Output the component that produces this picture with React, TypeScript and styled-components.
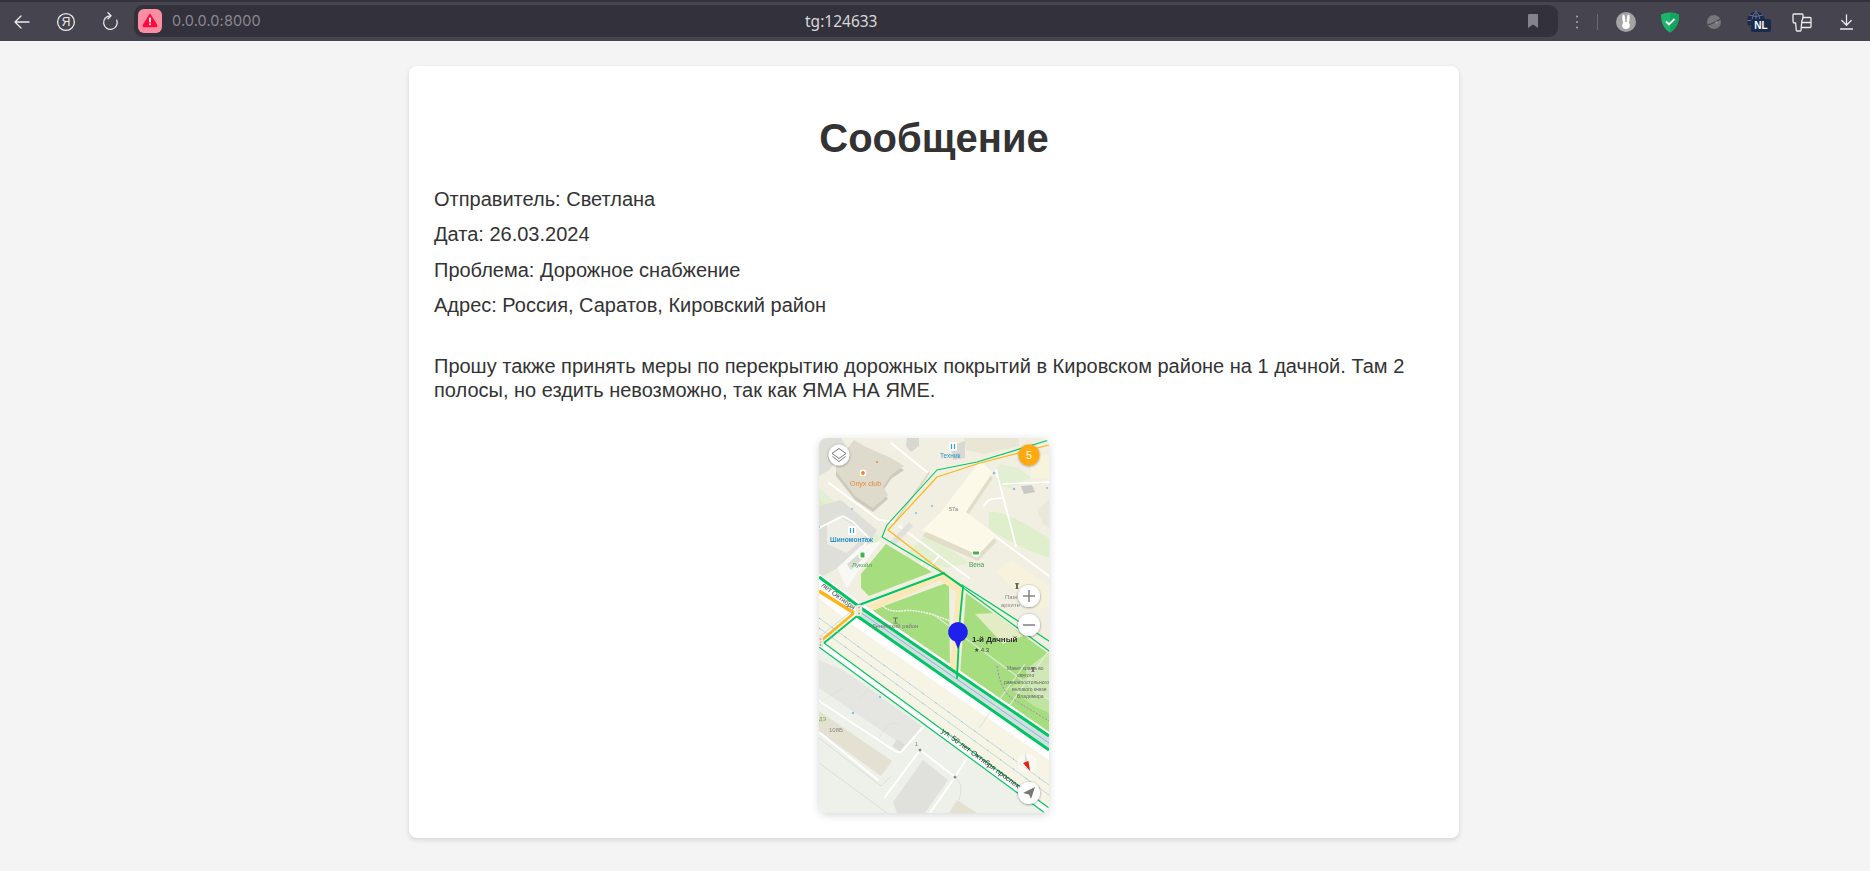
import React from "react";
import styled, { createGlobalStyle } from "styled-components";

const Global = createGlobalStyle`
  html, body { margin: 0; padding: 0; background: #f4f4f4; }
  body { font-family: "Liberation Sans", Arial, sans-serif; color: #333; overflow: hidden; }
`;

const Shell = styled.div`
  display: flex;
  flex-direction: column;
  height: 871px;
`;

const Toolbar = styled.header`
  display: flex;
  align-items: center;
  height: 41px;
  box-sizing: border-box;
  padding: 1px 2px 0 0;
  background: #46444e;
  border-top: 2px solid #34323c;
  flex: none;
`;

const IconSlot = styled.div<{ $w?: number }>`
  width: ${(p) => p.$w ?? 44}px;
  height: 32px;
  flex: none;
  display: flex;
  align-items: center;
  justify-content: center;
`;

const AddressBar = styled.div`
  flex: 1;
  margin-left: 2px;
  height: 32px;
  margin-top: -3px;
  position: relative;
  display: flex;
  align-items: center;
  background: #33313c;
  border-radius: 9px;
  padding-left: 4px;
`;

const SecurityBadge = styled.div`
  width: 24px;
  height: 24px;
  border-radius: 6px;
  background: #fc8ea3;
  display: flex;
  align-items: center;
  justify-content: center;
  flex: none;
`;

const Host = styled.span`
  font-family: Inter, "Noto Sans", sans-serif;
  font-size: 14.5px;
  color: #8a8890;
  margin-left: 10px;
  letter-spacing: 0.1px;
`;

const PageTitle = styled.span`
  position: absolute;
  left: 671px;
  top: 6px;
  font-family: "Noto Sans", sans-serif;
  font-size: 15.5px;
  line-height: 20px;
  color: #d8d7da;
`;

const BookmarkIcon = styled.div`
  position: absolute;
  right: 20px;
  top: 9px;
  display: flex;
`;

const Separator = styled.div`
  width: 1px;
  height: 16px;
  margin: 0 6px 0 1px;
  background: #6b6972;
  flex: none;
`;

const Page = styled.main`
  flex: 1;
  padding-right: 2px;
`;

const Card = styled.article`
  width: 1050px;
  box-sizing: border-box;
  margin: 25px auto 0;
  padding: 22px 25px 25px;
  background: #fff;
  border-radius: 8px;
  box-shadow: 0 2px 5px rgba(0, 0, 0, 0.13);
`;

const Heading = styled.h1`
  margin: 27px 0;
  text-align: center;
  font-size: 40px;
  line-height: 46px;
  font-weight: 700;
  color: #333;
`;

const Field = styled.p`
  margin: 12px 0;
  font-size: 20px;
  line-height: 23.33px;
  color: #333;
`;

const Message = styled.p`
  margin: 37px 0 36px;
  font-size: 20px;
  line-height: 24px;
  color: #333;
`;

const MapFrame = styled.figure`
  margin: 0 auto;
  width: 230px;
  height: 375px;
  border-radius: 8px;
  overflow: hidden;
  box-shadow: 0 2px 8px rgba(0, 0, 0, 0.16);
`;

const MapSvg = styled.svg`
  display: block;
  width: 230px;
  height: 375px;
`;

const MapLabel = styled.text<{ $size?: number; $fill?: string; $bold?: boolean }>`
  font-family: "Liberation Sans", Arial, sans-serif;
  font-size: ${(p) => p.$size ?? 6}px;
  fill: ${(p) => p.$fill ?? "#777"};
  font-weight: ${(p) => (p.$bold ? 700 : 400)};
`;

const G = "#04c562";
const O = "#fdb515";

function MapPicture() {
  return (
    <MapSvg viewBox="0 0 230 375">
      <defs>
        <filter id="soft" x="-5%" y="-5%" width="110%" height="110%">
          <feGaussianBlur stdDeviation="0.35" />
        </filter>
        <filter id="halo" x="-30%" y="-30%" width="160%" height="160%">
          <feDropShadow dx="0" dy="0.5" stdDeviation="1.1" floodColor="#000" floodOpacity="0.5" />
        </filter>
      </defs>
      <g filter="url(#soft)">
        <rect width="230" height="375" fill="#f1efe2" />
        {/* pale green bands, top area */}
        <polygon points="0,50 40,85 62,100 52,112 0,72" fill="#e3efd2" />
        <polygon points="0,60 10,72 8,78 0,70" fill="#dcecc8" />
        <polygon points="60,0 80,0 66,6" fill="#dcecc8" />
        <path d="M170,75 C180,70 205,85 230,100 L230,120 C205,112 185,100 170,92 Z" fill="#dfeecb" />
        <path d="M180,26 L200,30 L212,40 L190,50 L178,46 Z" fill="#e3efd2" />
        <path d="M82,120 L110,95 L150,125 L128,130 Z" fill="#e4efd2" />

        {/* grey blocks, top-left */}
        <polygon points="0,0 22,0 28,10 10,32 0,38" fill="#dfdfda" />
        <polygon points="0,68 22,62 58,92 50,105 28,125 0,140" fill="#dfdfda" />
        <polygon points="8,86 20,78 48,96 28,115 8,106" fill="#efeee6" />

        {/* Onyx club */}
        <polygon points="17,30 35,5 45,11 72,24 85,32 72,41 64,53 69,61 54,74 36,62 17,38" fill="#cfcbbc" />
        <polygon points="17,25 35,2 45,8 72,20 85,28 72,37 64,49 69,57 54,70 36,58 17,33" fill="#dedbcc" />

        {/* top buildings */}
        <polygon points="30,0 96,0 92,4 72,16 64,8 50,0" fill="#f2f0e4" />
        <polygon points="88,0 100,0 100,8 92,14 87,8" fill="#d9d8d0" />
        <polygon points="145,0 200,0 200,8 165,16 147,12" fill="#e9e6d6" />
        <polygon points="212,20 230,16 230,40 212,40" fill="#f7f3dd" />
        <polygon points="202,48 213,47 216,54 205,56" fill="#c9c9c4" />
        <polygon points="132,8 146,3 146,20 134,22" fill="#dad9d1" />

        {/* white lanes, top */}
        <g fill="none" stroke="#fff" strokeLinecap="round">
          <path d="M72,5 L108,34" strokeWidth="2" />
          <path d="M10,45 L60,82 L76,84" strokeWidth="2" />
          <path d="M76,84 L110,35" strokeWidth="1.6" stroke="#d9d7c8" />
          <path d="M177,32 L197,108" strokeWidth="1.8" />
          <path d="M184,46 L230,44" strokeWidth="1.6" />
          <path d="M184,60 C172,60 168,62 165,68" strokeWidth="1.6" />
          <path d="M176,98 L230,138" strokeWidth="1.8" />
          <path d="M80,88 L150,140" strokeWidth="1.6" />
          <path d="M92,86 L73,106" strokeWidth="6" stroke="#e1e1db" strokeLinecap="butt" />
          <path d="M0,90 L24,78 L34,84 L50,100 L30,130" strokeWidth="1.8" />
          <path d="M110,130 L120,118" strokeWidth="1.8" />
          <path d="M96,134 L104,124" strokeWidth="1.8" />
        </g>

        {/* Building 57a */}
        <polygon points="161,29 174,40 147,80 178,103 159,123 103,98 121,81" fill="#e2ddc8" />
        <polygon points="161,23 174,34 147,74 178,97 159,117 103,92 121,75" fill="#fdf9e8" />

        {/* pale building on right */}
        <polygon points="177,133 192,122 230,148 230,168 215,172" fill="#f7f2dc" />
        <polygon points="218,72 230,62 230,90 224,86" fill="#e9e8dc" />

        {/* white pad beside petrol station */}
        <polygon points="63,103 40,132 28,150 18,130 42,108" fill="#f8f8f5" />
        <polygon points="28,126 42,114 46,118 32,132" fill="#dcdcd6" />

        {/* parks */}
        <polygon points="67,106 113,134 50,158 42,150 42,136" fill="#a6de7f" />
        <polygon points="54,172 130,144 131,232 68,186" fill="#a6de7f" />
        <polygon points="147,155 230,216 230,298 141,237" fill="#a6de7f" />
        <polygon points="156,176 176,175 204,198 184,206" fill="#e3ecc5" />
        <polygon points="190,250 230,225 230,275 215,268" fill="#bfe5a0" />
        <polygon points="206,232 230,214 230,262 216,258" fill="#d4e9bb" opacity="0.8" />

        {/* main road bands */}
        <polygon points="0,136 42,165 230,294 230,375 0,209" fill="#f6f4e5" />
        <polygon points="0,136 42,165 230,294 230,322 38,190 0,160" fill="#ffffff" />
        <polygon points="42,170 230,298 230,312 38,178" fill="#cfe0e0" />
        <polygon points="0,209 230,378 0,378" fill="#eef0ea" />
        <polygon points="5,205 230,370 230,378 0,209" fill="#ffffff" />

        {/* lower buildings and lots */}
        <polygon points="24,232 104,289 88,310 0,250 0,222" fill="#e5e6e1" />
        <polygon points="0,273 73,323 62,338 0,293" fill="#e4e1d2" />
        <polygon points="104,322 129,342 106,375 78,375 74,364" fill="#e0e1dc" />
        <polygon points="138,362 158,375 130,375" fill="#e4e1d2" />
        <polygon points="78,302 85,307 81,313 74,308" fill="#dddeda" stroke="#c8c9c4" strokeWidth="0.4" />
        <g fill="none" stroke="#fff" strokeWidth="2" strokeLinecap="round">
          <path d="M-9,257 L76,313 Q81,316 84,312 L104,289" />
          <path d="M1,295 L59,342" />
          <path d="M66,359 L101,312 L136,339 L111,375" />
          <path d="M148,320 L136,339" />
        </g>
        <g fill="none" stroke="#d4d5d0" strokeWidth="0.7">
          <path d="M0,300 L62,348 L72,338" />
          <path d="M0,325 L68,375" />
          <path d="M136,339 C143,345 143,352 140,362" />
          <path d="M0,265 L24,250 M40,262 L52,248 M60,300 L66,290 C70,284 76,284 80,287 M40,230 L104,280" strokeDasharray="1.4 1.2" />
        </g>
        <circle cx="101" cy="312" r="1.5" fill="#8c8a86" />
        <circle cx="136" cy="339" r="1.5" fill="#8c8a86" />

        {/* park paths */}
        <g fill="none" stroke="#e8eee2" strokeWidth="1.2">
          <path d="M64,168 Q70,174 82,173 Q96,171 115,177 L134,184" strokeDasharray="2 0.8" stroke="#f1f4ef" strokeWidth="1.5" />
          <path d="M115,177 L230,262" stroke="#dfe8d5" />
          <path d="M206,226 L160,290" stroke="#dfe8d5" />
          <path d="M228,215 L190,268" stroke="#e8eee2" />
        </g>
        <path d="M178,228 C180,240 182,250 192,260 L230,283" fill="none" stroke="#a675d6" strokeWidth="0.9" strokeDasharray="2 1.6" />

        {/* side roads */}
        <polygon points="122,135 128,139 56,172 48,168" fill="#fbe8b7" />
        <polygon points="124,136 143,150 140,156 118,140" fill="#fbe8b7" />
        <polygon points="137,152 144,153 139,236 131,232" fill="#fbe8b7" />

        {/* route lines, thin */}
        <g fill="none" strokeLinejoin="round" strokeLinecap="round">
          <path d="M230,7 L161,25 L118,39 L69,92 L121,132 L144,149" stroke={O} strokeWidth="1.2" />
          <path d="M230,2 L158,24 L118,32 L68,87 L63,99 L124,135" stroke={G} strokeWidth="1.1" />
          <path d="M124,135 L230,213" stroke={G} strokeWidth="1.2" />
          <path d="M143,147 L230,203" stroke={G} strokeWidth="1.2" />
          <path d="M124,135 L143,148" stroke={G} strokeWidth="1.6" />
          <path d="M144,149 L141,180 L138,240" stroke={G} strokeWidth="1.8" />
          <path d="M125,135 L40,167" stroke={G} strokeWidth="2" />
        </g>

        {/* main road lines */}
        <g fill="none" strokeLinecap="butt">
          <path d="M0,153 L35,175" stroke={O} strokeWidth="3.4" />
          <path d="M35,175 L3,202" stroke={O} strokeWidth="2.6" />
          <path d="M0,139 L42,170 L230,298" stroke={G} strokeWidth="3" />
          <path d="M38,178 L230,312" stroke={G} strokeWidth="3" />
          <path d="M38,178 L5,205" stroke={G} strokeWidth="1.8" />
          <path d="M0,199 L33,173" stroke="#cfe0e0" strokeWidth="1" />
          <path d="M41,174 L230,305" stroke="#8fb6c8" strokeWidth="1" />
          <path d="M5,205 L230,370" stroke={G} strokeWidth="1.2" />
          <path d="M0,209 L230,378" stroke={G} strokeWidth="1.2" />
          <path d="M0,180 L230,347" stroke="#8cc0e3" strokeWidth="0.5" />
          <path d="M0,190 L230,357" stroke="#8cc0e3" strokeWidth="0.5" />
          <path d="M0,180 L230,347" stroke="#6fb0e0" strokeWidth="1" strokeDasharray="1 15" />
          <path d="M0,190 L230,357" stroke="#6fb0e0" strokeWidth="1" strokeDasharray="1 15" />
        </g>

        {/* traffic lights */}
        <rect x="37" y="167" width="6" height="11" rx="1.5" fill="#efefe8" stroke="#c8c8c0" strokeWidth="0.5" />
        <circle cx="40" cy="169.5" r="1" fill="#f2998c" />
        <circle cx="40" cy="172.5" r="1" fill="#f4cd5a" />
        <circle cx="40" cy="175.5" r="1" fill="#6dcc83" />
        <rect x="-1" y="198" width="5" height="11" rx="1.5" fill="#efefe8" stroke="#c8c8c0" strokeWidth="0.5" />
        <circle cx="1.5" cy="201" r="1" fill="#f2998c" />
        <circle cx="1.5" cy="204" r="1" fill="#f4cd5a" />
        <circle cx="1.5" cy="207" r="1" fill="#6dcc83" />

        {/* POI icons */}
        <circle cx="44" cy="35" r="3.4" fill="#fff" />
        <circle cx="44" cy="35" r="1.9" fill="#f5802b" />
        <circle cx="58" cy="24" r="1" fill="#f5802b" />
        <rect x="130" y="4" width="8" height="9" rx="1.5" fill="#fff" />
        <path d="M132.5,6 v5 M135.5,6 v5" stroke="#2f9fd8" strokeWidth="1.2" />
        <rect x="29" y="88" width="8" height="9" rx="1.5" fill="#fff" />
        <path d="M31.5,90 v5 M34.5,90 v5" stroke="#2f9fd8" strokeWidth="1.2" />
        <circle cx="43.5" cy="117" r="4" fill="#fff" />
        <rect x="41.5" y="114.5" width="4" height="5" rx="0.8" fill="#3cb54a" />
        <circle cx="157" cy="115" r="4" fill="#fff" />
        <path d="M154,113.5 h6 v3 h-6 z" fill="#3cb54a" />
        <path d="M74,180 h5 M76.5,180 v4 M74.5,185 h4" stroke="#666" strokeWidth="0.9" />
        <path d="M196,145 h4 l-1,2 v3 l1,1 h-4 l1,-1 v-3 z" fill="#666" />
        <path d="M212,229 h4 l-1,2 v2 l1,1 h-4 l1,-1 v-2 z" fill="#777" />
        <g fill="#7ec0ea">
          <circle cx="113" cy="68" r="1" />
          <circle cx="175" cy="35" r="1.2" />
          <circle cx="195" cy="51" r="1.2" />
          <circle cx="228" cy="50" r="1" />
          <circle cx="97" cy="75" r="1" />
          <circle cx="33" cy="71" r="0.9" />
          <circle cx="61" cy="259" r="1.2" />
          <circle cx="34" cy="275" r="1.2" />
          <circle cx="132" cy="298" r="1.2" />
          <circle cx="0" cy="89" r="1" />
        </g>

        {/* labels */}
        <MapLabel x="31" y="48" $size={7} $fill="#e28a3a">Onyx club</MapLabel>
        <MapLabel x="121" y="20" $size={6.5} $fill="#2a92c8">Техник</MapLabel>
        <MapLabel x="11" y="104" $size={6.6} $fill="#2a92c8" $bold>Шиномонтаж</MapLabel>
        <MapLabel x="33" y="129" $size={6} $fill="#3f9f4a">Лукойл</MapLabel>
        <MapLabel x="150" y="129" $size={6.5} $fill="#3f9f4a">Вена</MapLabel>
        <MapLabel x="130" y="73" $size={5.5} $fill="#777">57а</MapLabel>
        <MapLabel x="186" y="161" $size={6} $fill="#888">Пам</MapLabel>
        <MapLabel x="182" y="169" $size={6} $fill="#888">архите</MapLabel>
        <MapLabel x="53" y="190" $size={5.8} $fill="#777">Ленинский район</MapLabel>
        <MapLabel x="10" y="294" $size={6} $fill="#8a8a80">108Б</MapLabel>
        <MapLabel x="0" y="283" $size={5} $fill="#72b84a">ДЭ</MapLabel>
        <MapLabel x="96" y="308" $size={5} $fill="#777">1</MapLabel>
        <MapLabel x="153" y="204" $size={8} $fill="#2c2c2c" $bold>1-й Дачный</MapLabel>
        <MapLabel x="155" y="214" $size={6} $fill="#444">★ 4.3</MapLabel>
        <MapLabel x="188" y="232" $size={5} $fill="#666">Макет храма во</MapLabel>
        <MapLabel x="198" y="239" $size={5} $fill="#666">святого</MapLabel>
        <MapLabel x="185" y="246" $size={5} $fill="#666">равноапостольного</MapLabel>
        <MapLabel x="193" y="253" $size={5} $fill="#666">великого князя</MapLabel>
        <MapLabel x="198" y="260" $size={5} $fill="#666">Владимира</MapLabel>
        <MapLabel transform="translate(2 148) rotate(37)" $size={7} $fill="#3a3a3a">лет Октября</MapLabel>
        <MapLabel transform="translate(122 294) rotate(36.5)" $size={7.5} $fill="#2d2d2d">ул. 50 лет Октября проспект</MapLabel>
      </g>

      {/* pin */}
      <path d="M139,184 a10,10 0 0 1 3,19.5 L139,211 L136,203.5 A10,10 0 0 1 139,184 Z" fill="#2020ee" />

      {/* map controls */}
      <g filter="url(#halo)">
        <circle cx="20" cy="17" r="10.5" fill="#fff" />
        <circle cx="210" cy="17" r="10.5" fill="#ffa90a" />
        <circle cx="210" cy="158" r="11" fill="#fff" />
        <circle cx="210" cy="187" r="11" fill="#fff" />
        <circle cx="210" cy="355" r="11" fill="#fff" />
      </g>
      <path d="M20,10.5 L27,15.5 L20,20.5 L13,15.5 Z M13.5,18.5 L20,23.5 L26.5,18.5" fill="none" stroke="#555" strokeWidth="0.8" strokeLinejoin="round" />
      <MapLabel x="210" y="21" textAnchor="middle" $size={11} $fill="#fff">5</MapLabel>
      <path d="M204,158 h12 M210,152 v12" stroke="#888" strokeWidth="1.6" />
      <path d="M204,187 h12" stroke="#888" strokeWidth="1.6" />
      <path d="M216,349 L212,361 L210,356.5 L204,355 Z" fill="#777" />
      <circle cx="208" cy="325" r="10" fill="#fff" opacity="0.45" />
      <path d="M206,314 L206,326 L209,326 Z" fill="#d9d9d9" />
      <path d="M211,333 L204,325 L209.5,323 Z" fill="#f0180c" />
    </MapSvg>
  );
}

const Stroke = { fill: "none", stroke: "#ebebed", strokeWidth: 1.3, strokeLinecap: "round", strokeLinejoin: "round" } as const;

const IconLetter = styled.text`
  font-family: "Liberation Sans", Arial, sans-serif;
  font-size: 12px;
  fill: #ebebed;
`;

const TagLetter = styled.text`
  font-family: "Liberation Sans", Arial, sans-serif;
  font-size: 10px;
  font-weight: 700;
  fill: #fff;
`;

export default function App() {
  return (
    <Shell>
      <Global />
      <Toolbar>
        <IconSlot>
          <svg width="16" height="14" viewBox="0 0 16 14" {...Stroke}>
            <path d="M15,7 H1 M7,1 L1,7 L7,13" />
          </svg>
        </IconSlot>
        <IconSlot>
          <svg width="20" height="20" viewBox="0 0 20 20">
            <circle cx="10" cy="10" r="8.4" {...Stroke} />
            <IconLetter x="10" y="14.2" textAnchor="middle">Я</IconLetter>
          </svg>
        </IconSlot>
        <IconSlot>
          <svg width="18" height="20" viewBox="0 0 18 20" {...Stroke}>
            <path d="M9.5,3.8 A6.8,6.8 0 1 0 15.8,8.2" />
            <path d="M7,0.8 L10,3.8 L7,6.8" />
          </svg>
        </IconSlot>
        <AddressBar>
          <SecurityBadge>
            <svg width="16" height="15" viewBox="0 0 16 15">
              <path d="M8,1.4 L14.6,12.2 Q15,13.6 13.6,13.6 H2.4 Q1,13.6 1.4,12.2 Z" fill="#ff0a3c" stroke="#ff0a3c" strokeWidth="1.4" strokeLinejoin="round" />
              <rect x="7.1" y="4.6" width="1.8" height="4.8" rx="0.6" fill="#fff" />
              <circle cx="8" cy="11.3" r="1.05" fill="#fff" />
            </svg>
          </SecurityBadge>
          <Host>0.0.0.0:8000</Host>
          <PageTitle>tg:124633</PageTitle>
          <BookmarkIcon>
            <svg width="10" height="14" viewBox="0 0 10 14">
              <path d="M0,1 Q0,0 1,0 H9 Q10,0 10,1 V14 L5,10.4 L0,14 Z" fill="#84828a" />
            </svg>
          </BookmarkIcon>
        </AddressBar>
        <IconSlot $w={38}>
          <svg width="4" height="14" viewBox="0 0 4 14">
            <circle cx="2" cy="1.5" r="1" fill="#a9a8ae" />
            <circle cx="2" cy="7" r="1" fill="#a9a8ae" />
            <circle cx="2" cy="12.5" r="1" fill="#a9a8ae" />
          </svg>
        </IconSlot>
        <Separator />
        <IconSlot>
          <svg width="20" height="20" viewBox="0 0 20 20">
            <circle cx="10" cy="10" r="10" fill="#a3a3a4" />
            <ellipse cx="7.8" cy="7" rx="1.4" ry="4.6" fill="#fff" transform="rotate(-5 7.8 7)" />
            <ellipse cx="12.2" cy="7" rx="1.4" ry="4.6" fill="#fff" transform="rotate(5 12.2 7)" />
            <ellipse cx="10" cy="13.5" rx="3.8" ry="3.4" fill="#fff" />
          </svg>
        </IconSlot>
        <IconSlot>
          <svg width="20" height="21" viewBox="0 0 20 21">
            <path d="M10,0.5 C13,0.5 16.5,1.3 19,2.5 C19,10 17,16.5 10,20.5 C3,16.5 1,10 1,2.5 C3.5,1.3 7,0.5 10,0.5 Z" fill="#1cb56c" />
            <path d="M10,0.5 C13,0.5 16.5,1.3 19,2.5 C19,10 17,16.5 10,20.5 Z" fill="#12a55f" />
            <path d="M6,9.5 L9,12.5 L14.5,7" fill="none" stroke="#fff" strokeWidth="1.8" />
          </svg>
        </IconSlot>
        <IconSlot>
          <svg width="14" height="14" viewBox="0 0 14 14">
            <circle cx="7" cy="7" r="7" fill="#77767a" />
            <path d="M0.8,9.8 C5,9 10,6 13.4,4" fill="none" stroke="#46444e" strokeWidth="1.1" />
            <circle cx="9.5" cy="7.5" r="1.1" fill="#a5a4a8" />
          </svg>
        </IconSlot>
        <IconSlot>
          <svg width="26" height="22" viewBox="0 0 26 22">
            <circle cx="11" cy="9.5" r="9" fill="#1c2a4e" />
            <path d="M2,9.5 H20 M11,0.5 V18.5 M4,4 Q11,7 18,4 M5,15 Q11,12 17,15 M11,0.5 C6,4 6,15 11,18.5 M11,0.5 C16,4 16,15 11,18.5" fill="none" stroke="#7a8298" strokeWidth="0.8" />
            <rect x="6" y="8" width="20" height="13" rx="2" fill="#1c2a4e" />
            <TagLetter x="16" y="18.4" textAnchor="middle">NL</TagLetter>
          </svg>
        </IconSlot>
        <IconSlot>
          <svg width="20" height="19" viewBox="0 0 20 19" {...Stroke}>
            <path d="M2,1 H10 Q11,1 11,2 V5 L9.8,8 L9,17.5 Q9,18 8.4,18 H5 Q4.4,18 4.3,17.4 L3.6,10 H2.6 Q1,10 1,8 V2 Q1,1 2,1 Z" />
            <path d="M11,4.5 H18 Q19,4.5 19,5.5 V13.5 Q19,14.5 18,14.5 H9.6 M10,9.5 H19" />
          </svg>
        </IconSlot>
        <IconSlot>
          <svg width="13" height="16" viewBox="0 0 13 16" {...Stroke}>
            <path d="M6.5,0.8 V11 M1.8,6.5 L6.5,11.2 L11.2,6.5 M0.5,15 H12.5" />
          </svg>
        </IconSlot>
      </Toolbar>
      <Page>
        <Card>
          <Heading>Сообщение</Heading>
          <Field>Отправитель: Светлана</Field>
          <Field>Дата: 26.03.2024</Field>
          <Field>Проблема: Дорожное снабжение</Field>
          <Field>Адрес: Россия, Саратов, Кировский район</Field>
          <Message>
            Прошу также принять меры по перекрытию дорожных покрытий в Кировском районе на 1 дачной. Там 2
            полосы, но ездить невозможно, так как ЯМА НА ЯМЕ.
          </Message>
          <MapFrame>
            <MapPicture />
          </MapFrame>
        </Card>
      </Page>
    </Shell>
  );
}
